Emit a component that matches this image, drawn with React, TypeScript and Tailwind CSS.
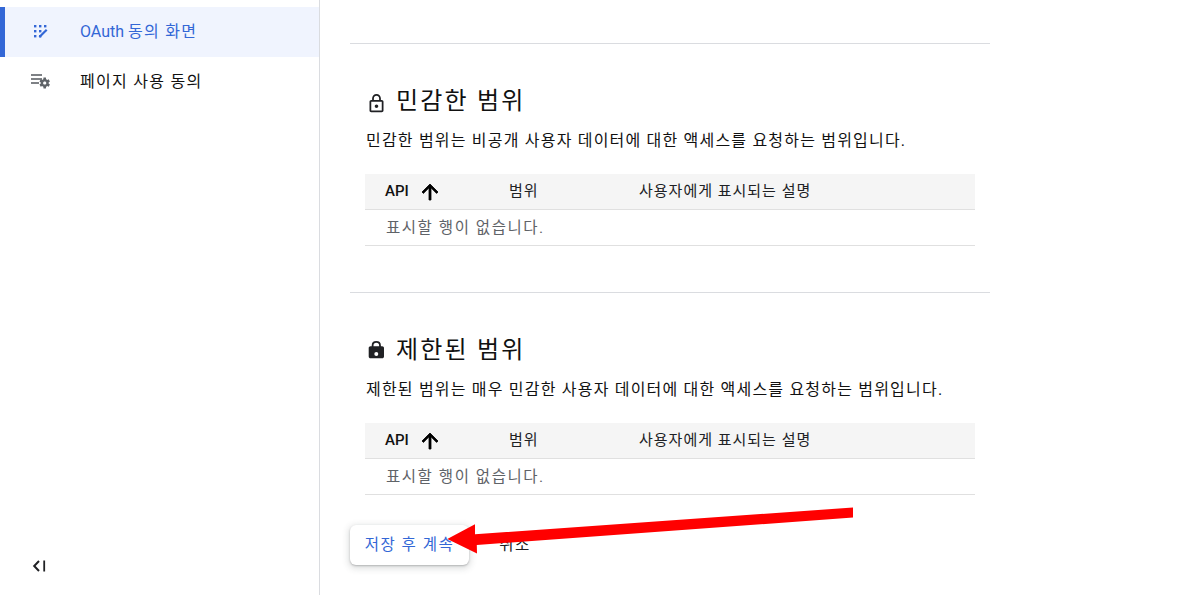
const font = { fontFamily: '"Roboto", "Noto Sans CJK KR", sans-serif' };

function LockOpenIcon() {
  return (
    <svg width="21" height="21" viewBox="0 0 24 24" fill="#202124">
      <path d="M18 8h-1V6c0-2.76-2.24-5-5-5S7 3.24 7 6v2H6c-1.1 0-2 .9-2 2v10c0 1.1.9 2 2 2h12c1.1 0 2-.9 2-2V10c0-1.1-.9-2-2-2zM9 6c0-1.66 1.34-3 3-3s3 1.34 3 3v2H9V6zm9 14H6V10h12v10zm-6-3c1.1 0 2-.9 2-2s-.9-2-2-2-2 .9-2 2 .9 2 2 2z" />
    </svg>
  );
}

function LockIcon() {
  return (
    <svg width="24" height="24" viewBox="0 0 24 24" fill="#202124">
      <path d="M7.6 9V7.4C7.6 5.2 9.1 3.9 11.3 3.9s3.7 1.3 3.7 3.5V9" fill="none" stroke="#202124" strokeWidth="1.8" />
      <path
        fillRule="evenodd"
        d="M5.5 8.2h11.7c1 0 1.8.8 1.8 1.8v8.5c0 1-.8 1.8-1.8 1.8H5.5c-1 0-1.8-.8-1.8-1.8V10c0-1 .8-1.8 1.8-1.8zM11.3 14a2 2 0 1 0 0 4 2 2 0 0 0 0-4z"
      />
    </svg>
  );
}

function ArrowUp() {
  return (
    <svg width="24" height="24" viewBox="0 0 24 24" fill="#000">
      <path d="M4 12l1.41 1.41L11 7.83V20h2V7.83l5.58 5.59L20 12l-8-8-8 8z" stroke="#000" strokeWidth="0.8" />
    </svg>
  );
}

function ConsentIcon() {
  return (
    <svg width="16" height="16" viewBox="0 0 16 16" fill="#3367d6">
      <rect x="2" y="2" width="2.4" height="2.4" />
      <rect x="7" y="2" width="2.4" height="2.4" />
      <rect x="12" y="2" width="2.4" height="2.4" />
      <rect x="2" y="7" width="2.4" height="2.4" />
      <rect x="7" y="7" width="2.4" height="2.4" />
      <rect x="2" y="12" width="2.4" height="2.4" />
      <rect x="7" y="12" width="2.4" height="2.4" />
      <path d="M14.7 6.7 7.4 14" stroke="#3367d6" strokeWidth="2.2" fill="none" />
    </svg>
  );
}

function PageUsageIcon() {
  return (
    <svg width="24" height="24" viewBox="0 0 24 24" fill="#5f6368">
      <rect x="2" y="5.2" width="11" height="1.6" />
      <rect x="2" y="9.2" width="11" height="1.6" />
      <rect x="2" y="13.2" width="8" height="1.6" />
      <g transform="translate(-2 -1)">
        <path d="M21.6 15.6c0-.2.1-.4.1-.6s0-.4-.1-.6l1.3-1-1.2-2.1-1.5.6c-.3-.3-.7-.5-1.1-.6L18.9 9.6h-2.4l-.2 1.7c-.4.1-.8.3-1.1.6l-1.5-.6-1.2 2.1 1.3 1c0 .2-.1.4-.1.6s0 .4.1.6l-1.3 1 1.2 2.1 1.5-.6c.3.3.7.5 1.1.6l.2 1.7h2.4l.2-1.7c.4-.1.8-.3 1.1-.6l1.5.6 1.2-2.1-1.3-1zM17.7 16.6c-.9 0-1.6-.7-1.6-1.6s.7-1.6 1.6-1.6 1.6.7 1.6 1.6-.7 1.6-1.6 1.6z" />
      </g>
    </svg>
  );
}

function CollapseIcon() {
  return (
    <svg width="16" height="16" viewBox="0 0 16 16" fill="none" stroke="#202124" strokeWidth="2">
      <path d="M8 3 3.2 8 8 13" />
      <path d="M13.2 2.5v11" strokeWidth="1.8" />
    </svg>
  );
}

function ScopeSection({
  icon,
  title,
  description,
  iconClass,
}: {
  icon: React.ReactNode;
  title: string;
  description: string;
  iconClass: string;
}) {
  return (
    <section className="px-[15px]">
      <div className="flex h-[36px] items-center">
        <span className={`mr-[6px] flex w-[24px] ${iconClass}`}>{icon}</span>
        <h2 className="pl-[1px] text-[24px] font-normal leading-[36px] tracking-[2.2px] text-[#111]">{title}</h2>
      </div>
      <p className="mt-[12px] pl-[1px] text-[16px] leading-[20px] tracking-[1.2px] text-[#111]">{description}</p>
      <div className="mt-[23px]">
        <div className="flex h-[36px] items-center border-b border-[#e0e0e0] bg-[#f5f5f5] pl-[20px] text-[15px] tracking-[1px] text-[#202124]">
          <div className="flex w-[124px] items-center">
            <span className="text-[15px] font-medium tracking-normal text-[#111]">API</span>
            <span className="ml-[9px] flex"><ArrowUp /></span>
          </div>
          <div className="w-[130px]">범위</div>
          <div>사용자에게 표시되는 설명</div>
        </div>
        <div className="flex h-[36px] items-center border-b border-[#e0e0e0] pt-[2px] pl-[21px] text-[15.5px] tracking-[1.55px] text-[#5f6368]">
          표시할 행이 없습니다.
        </div>
      </div>
    </section>
  );
}

export default function App() {
  return (
    <div className="relative flex h-[595px] w-[1198px] overflow-hidden bg-white" style={font}>
      <aside className="flex w-[320px] shrink-0 flex-col border-r border-[#dadce0] pt-[7px]">
        <div className="flex h-[50px] items-center border-l-[5px] border-[#3367d6] bg-[#f0f4fe] text-[16px] text-[#3367d6]">
          <span className="ml-[27px] flex w-[16px] pb-[2px]"><ConsentIcon /></span>
          <span className="ml-[32px]">OAuth <span className="tracking-[1.28px]">동의 화면</span></span>
        </div>
        <div className="flex h-[50px] items-center text-[16px] tracking-[1.28px] text-[#111]">
          <span className="ml-[29px] flex w-[24px] pb-[2px]"><PageUsageIcon /></span>
          <span className="ml-[27px]">페이지 사용 동의</span>
        </div>
        <div className="mt-auto mb-[21px] ml-[31px] flex"><CollapseIcon /></div>
      </aside>

      <main className="box-content w-[640px] pl-[30px]">
        <div className="mt-[43px] border-t border-[#dadce0]" />
        <div className="mt-[39px]">
          <ScopeSection
            icon={<LockOpenIcon />}
            title="민감한 범위"
            description="민감한 범위는 비공개 사용자 데이터에 대한 액세스를 요청하는 범위입니다."
            iconClass="mt-[5px] pl-[1px]"
          />
        </div>
        <div className="mt-[46px] border-t border-[#dadce0]" />
        <div className="mt-[39px]">
          <ScopeSection
            icon={<LockIcon />}
            title="제한된 범위"
            description="제한된 범위는 매우 민감한 사용자 데이터에 대한 액세스를 요청하는 범위입니다."
            iconClass=""
          />
        </div>
        <div className="mt-[30px] flex items-center text-[15.5px] tracking-[1.5px]">
          <button className="h-[40px] w-[119px] rounded-[6px] bg-white pt-[2px] text-[#3367d6] shadow-[0_1px_2px_rgba(60,64,67,0.3),0_2px_6px_2px_rgba(60,64,67,0.15)]">
            저장 후 계속
          </button>
          <button className="ml-[14px] h-[40px] w-[64px] pt-[2px] text-[#202124]">취소</button>
        </div>
      </main>

      <svg className="pointer-events-none absolute left-0 top-0" width="1198" height="595" viewBox="0 0 1198 595">
        <polygon fill="#ff0000" points="853,507.5 853,517.5 476.8,545 477,553.5 447.3,539 475,524.3 475,534.3" />
      </svg>
    </div>
  );
}
